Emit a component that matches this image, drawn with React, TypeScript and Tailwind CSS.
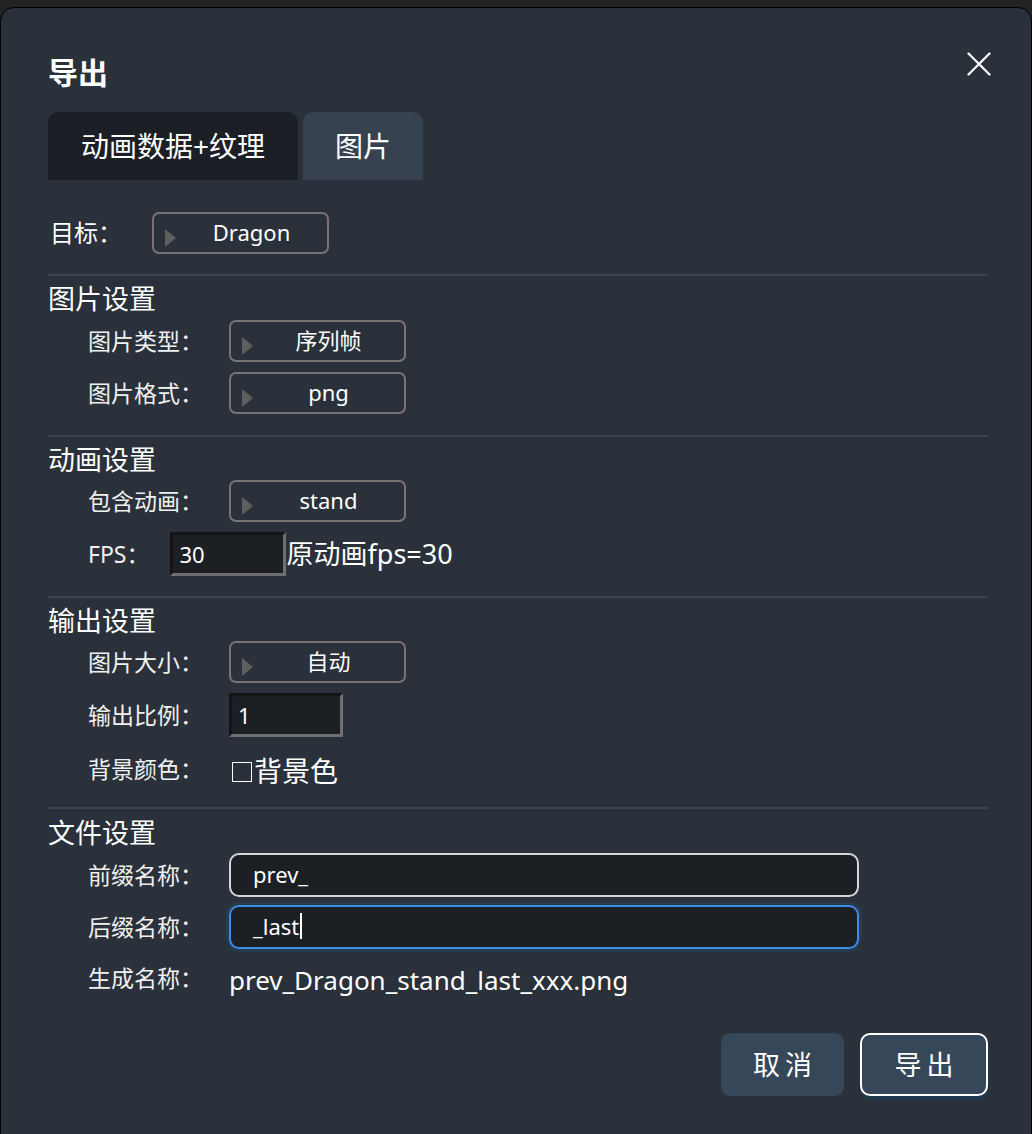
import React from 'react';

const Triangle: React.FC = () => (
  <svg width="11" height="18" viewBox="0 0 11 18" className="ml-[11px] mt-[9px] shrink-0">
    <polygon points="0,0 11,9 0,18" fill="#5e5e5e" />
  </svg>
);

const Select: React.FC<{ value: string }> = ({ value }) => (
  <div className="w-[177px] h-[42px] border-2 border-[#7b7373] rounded-[7px] flex items-center">
    <Triangle />
    <span className="flex-1 text-center text-[22px] leading-none pb-[2px]">{value}</span>
  </div>
);

const Label: React.FC<{ children: React.ReactNode; mr?: string }> = ({ children, mr = 'mr-[26px]' }) => (
  <span className={`ml-[40px] ${mr} text-[23px] leading-none text-[#f0f0f0]`}>{children}</span>
);

const SectionTitle: React.FC<{ children: React.ReactNode; mt?: string }> = ({ children, mt = 'mt-[8px]' }) => (
  <div className={`${mt} text-[27px] leading-[30px]`}>{children}</div>
);

const Divider: React.FC<{ mt: string }> = ({ mt }) => <div className={`${mt} h-[2px] bg-[#3a4552]`} />;

const BevelInput: React.FC<{ value: string; w: string }> = ({ value, w }) => (
  <div
    className={`${w} h-[44px] bg-[#1c2025] border-[3px] border-t-[#121416] border-l-[#121416] border-r-[#6f6f6f] border-b-[#6f6f6f] flex items-center pl-[6px] text-[22px] leading-none`}
  >
    {value}
  </div>
);

const App: React.FC = () => {
  return (
    <div className="w-[1032px] h-[1134px] bg-[#232323] pt-[7px] overflow-hidden font-['Noto_Sans','Noto_Sans_CJK_SC',sans-serif] text-white">
      <div className="h-[1140px] bg-[#2a313b] border border-black rounded-[14px] pl-[47px] pr-[43px]">
        {/* header */}
        <div className="flex justify-between items-start pt-[50px]">
          <h1 className="text-[30px] leading-[30px] font-bold">导出</h1>
          <svg width="24" height="24" viewBox="0 0 24 24" className="-mt-[6px] -mr-[3px]">
            <path d="M1.5 1.5 L22.5 22.5 M22.5 1.5 L1.5 22.5" stroke="#fff" strokeWidth="2.2" strokeLinecap="round" />
          </svg>
        </div>

        {/* tabs */}
        <div className="mt-[24px] flex gap-[5px]">
          <div className="h-[68px] w-[250px] bg-[#1c2026] rounded-t-[10px] flex items-center justify-center text-[28px] leading-none">
            动画数据+纹理
          </div>
          <div className="h-[68px] w-[120px] bg-[#36424f] rounded-t-[10px] flex items-center justify-center text-[28px] leading-none">
            图片
          </div>
        </div>

        {/* target */}
        <div className="mt-[32px] h-[42px] flex items-center">
          <span className="ml-[2px] mr-[30px] text-[24px] leading-none">目标：</span>
          <Select value="Dragon" />
        </div>

        <Divider mt="mt-[20px]" />

        <SectionTitle>图片设置</SectionTitle>
        <div className="mt-[6px] h-[42px] flex items-center">
          <Label>图片类型：</Label>
          <Select value="序列帧" />
        </div>
        <div className="mt-[10px] h-[42px] flex items-center">
          <Label>图片格式：</Label>
          <Select value="png" />
        </div>

        <Divider mt="mt-[21px]" />

        <SectionTitle>动画设置</SectionTitle>
        <div className="mt-[5px] h-[42px] flex items-center">
          <Label>包含动画：</Label>
          <Select value="stand" />
        </div>
        <div className="mt-[10px] h-[44px] flex items-center">
          <Label mr="mr-[21px]">FPS：</Label>
          <BevelInput value="30" w="w-[116px]" />
          <span className="text-[27px] leading-none pb-[2px]">原动画fps=30</span>
        </div>

        <Divider mt="mt-[20px]" />

        <SectionTitle>输出设置</SectionTitle>
        <div className="mt-[5px] h-[42px] flex items-center">
          <Label>图片大小：</Label>
          <Select value="自动" />
        </div>
        <div className="mt-[10px] h-[44px] flex items-center">
          <Label>输出比例：</Label>
          <BevelInput value="1" w="w-[114px]" />
        </div>
        <div className="mt-[11px] h-[42px] flex items-center">
          <Label>背景颜色：</Label>
          <span className="ml-[3px] mt-[6px] w-[20px] h-[20px] border-[1.5px] border-white" />
          <span className="ml-[2px] text-[28px] leading-none mt-[4px]">背景色</span>
        </div>

        <Divider mt="mt-[17px]" />

        <SectionTitle mt="mt-[9px]">文件设置</SectionTitle>
        <div className="mt-[5px] h-[44px] flex items-center">
          <Label>前缀名称：</Label>
          <div className="w-[630px] h-[44px] bg-[#1c2025] border-2 border-[#d6d6d6] rounded-[10px] flex items-center pl-[22px] text-[22px] leading-none pb-[2px]">
            prev_
          </div>
        </div>
        <div className="mt-[8px] h-[44px] flex items-center">
          <Label>后缀名称：</Label>
          <div className="w-[630px] h-[44px] bg-[#1c2025] border-2 border-[#3a8ee8] rounded-[10px] shadow-[0_0_0_3px_#283a4e] flex items-center pl-[22px] text-[22px] leading-none pb-[2px]">
            _last
            <span className="ml-[1px] w-[2px] h-[26px] bg-white" />
          </div>
        </div>
        <div className="mt-[8px] h-[42px] flex items-center">
          <Label>生成名称：</Label>
          <span className="text-[26px] leading-none mt-[4px]">prev_Dragon_stand_last_xxx.png</span>
        </div>

        {/* buttons */}
        <div className="mt-[34px] flex justify-end gap-[16px]">
          <button className="w-[123px] h-[63px] bg-[#37475a] rounded-[9px] text-[27px] leading-none tracking-[5px] pl-[5px]">
            取消
          </button>
          <button className="w-[128px] h-[63px] bg-[#37475a] border-2 border-white rounded-[10px] shadow-[0_3px_2px_#1f3a52] text-[27px] leading-none tracking-[5px] pl-[5px]">
            导出
          </button>
        </div>
      </div>
    </div>
  );
};

export default App;
